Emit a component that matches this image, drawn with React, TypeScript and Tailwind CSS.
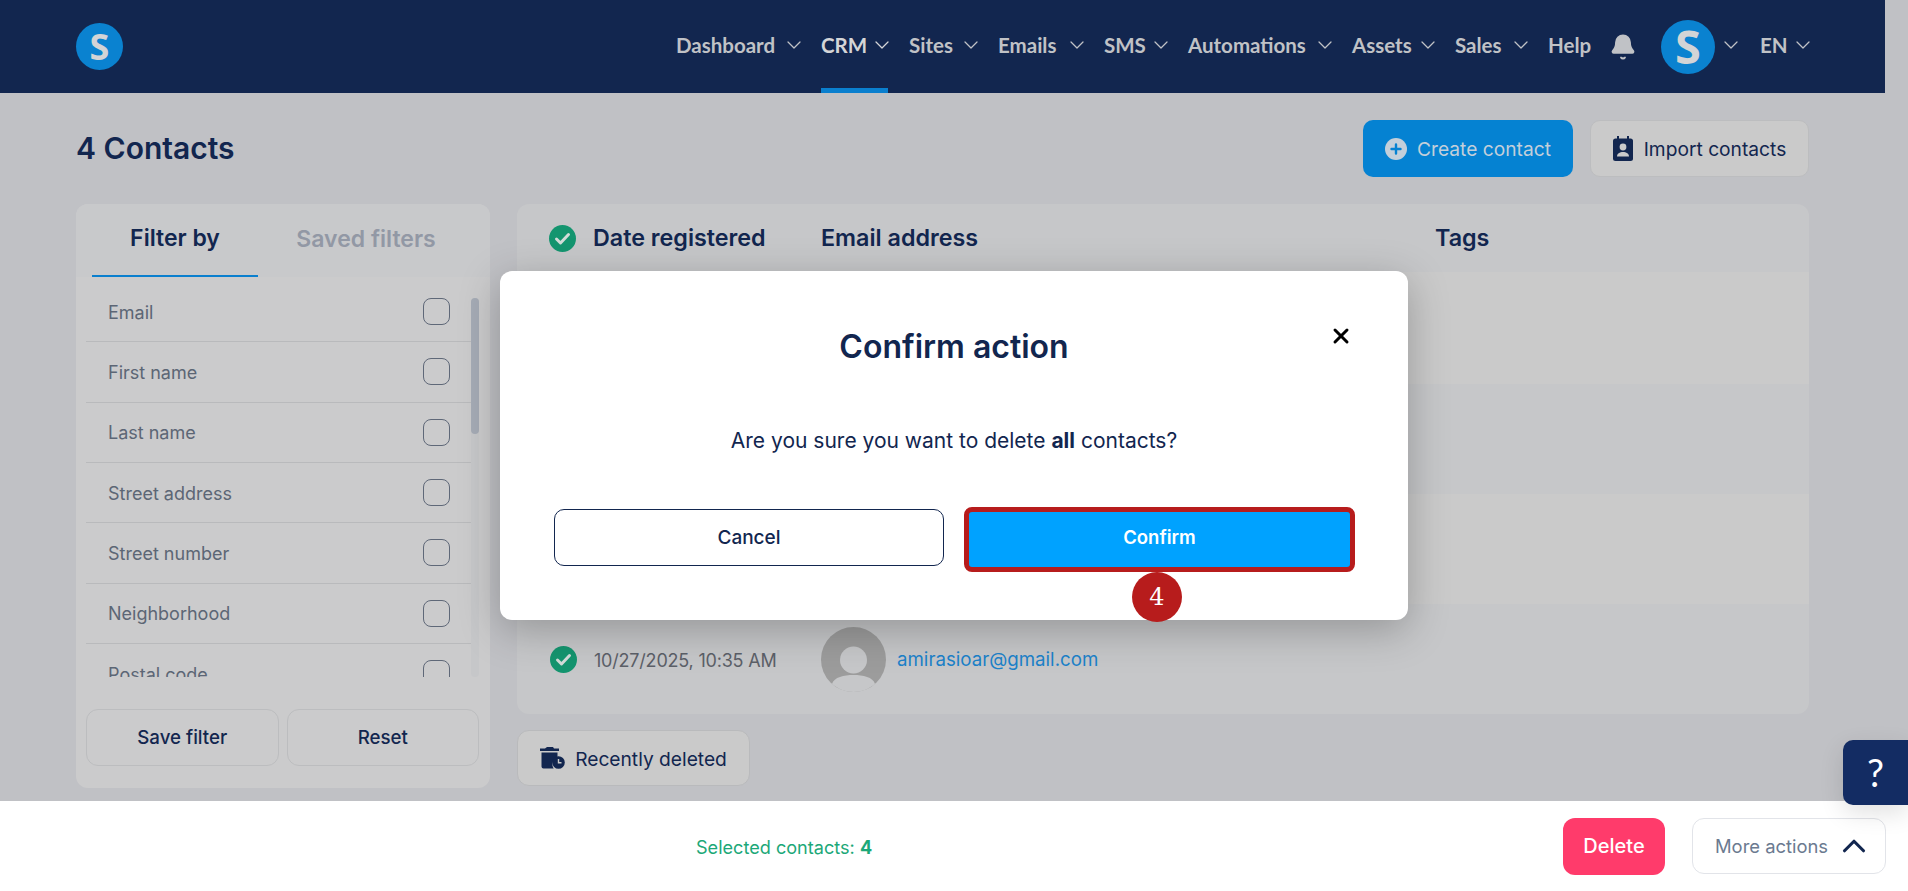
import React from "react";
import { Bell, ChevronDown, ChevronUp, X } from "lucide-react";

const navItems = [
  { label: "Dashboard", width: "w-[100px]" },
  { label: "CRM", width: "w-[43px]", active: true },
  { label: "Sites", width: "w-[44px]" },
  { label: "Emails", width: "w-[61px]" },
  { label: "SMS", width: "w-[39px]" },
  { label: "Automations", width: "w-[119px]" },
  { label: "Assets", width: "w-[58px]" },
  { label: "Sales", width: "w-[48px]" },
];

const filterFields = [
  "Email",
  "First name",
  "Last name",
  "Street address",
  "Street number",
  "Neighborhood",
  "Postal code",
];

function CheckCircle() {
  return (
    <svg viewBox="0 0 27 27" className="w-[27px] h-[27px] shrink-0">
      <circle cx="13.5" cy="13.5" r="13.5" fill="#14956f" />
      <path d="M7.5 14l4 4 8-8.5" fill="none" stroke="#d3dcd9" strokeWidth="3" strokeLinecap="round" strokeLinejoin="round" />
    </svg>
  );
}

function PlusCircle() {
  return (
    <svg viewBox="0 0 22 22" className="w-[22px] h-[22px] shrink-0">
      <circle cx="11" cy="11" r="11" fill="#c3cfda" />
      <path d="M11 6.5v9M6.5 11h9" stroke="#0582d2" strokeWidth="2.4" strokeLinecap="round" />
    </svg>
  );
}

function ContactBook() {
  return (
    <svg viewBox="0 0 20 25" className="w-[20px] h-[25px] shrink-0">
      <path d="M4 0h2v4H4zM14 0h2v4h-2z" fill="#12264f" />
      <rect x="0" y="2.5" width="20" height="22.5" rx="2.5" fill="#12264f" />
      <circle cx="10" cy="11" r="3.4" fill="#cacaca" />
      <path d="M4 20.5c0-3 2.7-4.5 6-4.5s6 1.500 6 4.500z" fill="#cacaca" />
    </svg>
  );
}

function TrashClock() {
  return (
    <svg viewBox="0 0 25 22" className="w-[25px] h-[22px] shrink-0">
      <path d="M7 0h6l1 1.500h5V4H0V1.500h5z" fill="#12264f" />
      <path d="M1.500 5.500h16v5.200a7 7 0 0 0-3.800 10.800H3.500a2 2 0 0 1-2-2z" fill="#12264f" />
      <circle cx="18.500" cy="15.500" r="6.300" fill="#12264f" />
      <path d="M18.500 12v3.800h3" fill="none" stroke="#cacaca" strokeWidth="1.400" />
    </svg>
  );
}

function Avatar() {
  return (
    <svg viewBox="0 0 65 65" className="w-[65px] h-[65px] shrink-0">
      <circle cx="32.500" cy="32.500" r="32.500" fill="#9c9c9c" />
      <circle cx="32.500" cy="33" r="13.500" fill="#c6c7c9" />
      <path d="M11 57c2-7 12-9 21.500-9s19.500 2 21.500 9c-6 5-13.500 8-21.500 8s-15.500-3-21.500-8z" fill="#c6c7c9" />
    </svg>
  );
}

function Logo({ size }: { size: "sm" | "lg" }) {
  return (
    <div
      className={
        size === "lg"
          ? "w-[54px] h-[54px] rounded-full bg-[#0a82d0] flex items-center justify-center text-[47px] font-bold leading-none text-[#d3d4d6] font-['Open_Sans',sans-serif]"
          : "w-[47px] h-[47px] rounded-full bg-[#0a82d0] flex items-center justify-center text-[36px] font-bold leading-none text-[#d3d4d6] font-['Open_Sans',sans-serif]"
      }
    >
      S
    </div>
  );
}

export default function App() {
  return (
    <div className="relative h-[891px] w-full overflow-hidden bg-[#c0c1c5] font-['Inter',sans-serif] text-[#12264f]">
      {/* Page behind the dialog */}
      <div className="h-[801px] w-[1885px]">
        <header className="h-[93px] bg-[#12264f] flex items-center pl-[76px]">
          <Logo size="sm" />
          <nav className="ml-auto flex items-center h-full text-[#c0c2c6] font-['Lato',sans-serif] font-bold text-[20.5px]">
            {navItems.map((item) => (
              <div
                key={item.label}
                className={
                  item.active
                    ? "relative h-full flex items-center mr-[15px] text-[#d4d5d7]"
                    : "relative h-full flex items-center mr-[15px]"
                }
              >
                <span className={`${item.width} pb-[2px] whitespace-nowrap`}>{item.label}</span>
                <ChevronDown className="w-[24px] h-[24px] ml-[6px] -mt-[4px]" strokeWidth={1.250} />
                {item.active && (
                  <span className="absolute left-0 right-[6px] bottom-0 h-[5px] bg-[#0a7fce]" />
                )}
              </div>
            ))}
            <span className="w-[42px] pb-[2px] whitespace-nowrap">Help</span>
            <Bell className="w-[28px] h-[28px] ml-[19px]" fill="#c0c2c6" strokeWidth={1.500} />
            <div className="ml-[24px]">
              <Logo size="lg" />
            </div>
            <ChevronDown className="w-[24px] h-[24px] ml-[4px] -mt-[4px]" strokeWidth={1.250} />
            <span className="ml-[17px] w-[26px] pb-[2px]">EN</span>
            <ChevronDown className="w-[24px] h-[24px] ml-[5px] -mt-[4px] mr-[70px]" strokeWidth={1.250} />
          </nav>
        </header>

        <div className="pl-[76px] pr-[76px]">
          <div className="h-[111px] flex items-center justify-between">
            <h1 className="text-[30px] font-semibold">4 Contacts</h1>
            <div className="flex items-center gap-[17px]">
              <button className="h-[57px] w-[210px] rounded-[10px] bg-[#0582d2] text-[#c3cfda] text-[19.2px] flex items-center justify-center gap-[10px]">
                <PlusCircle />
                <span className="pt-[2px]">Create contact</span>
              </button>
              <button className="h-[57px] w-[219px] rounded-[10px] bg-[#cacaca] border border-[#bcbdbf] text-[19.2px] flex items-center justify-center gap-[11px]">
                <ContactBook />
                <span className="pt-[2px]">Import contacts</span>
              </button>
            </div>
          </div>

          <div className="flex gap-[27px]">
            {/* Filters */}
            <aside className="w-[414px] h-[584px] rounded-[12px] bg-[#cbcbcc] overflow-hidden">
              <div className="flex h-[73px] bg-[#c8c9cb] pl-[16px] text-[23px] font-semibold">
                <div className="w-[166px] flex items-center justify-center border-b-[2px] border-[#0a7fce] pb-[2px]">
                  Filter by
                </div>
                <div className="w-[216px] flex items-center justify-center text-[#9298a5] pb-[2px]">
                  Saved filters
                </div>
              </div>
              <div className="relative h-[400px] overflow-hidden pt-[5px] pl-[10px] pr-[19px]">
                {filterFields.map((field) => (
                  <div
                    key={field}
                    className="h-[60.33px] flex items-center justify-between border-b border-[#b9babc] pl-[22px] pr-[21px] text-[#5c6675] text-[18px]"
                  >
                    <span className="mt-[1px]">{field}</span>
                    <span className="w-[27px] h-[27px] rounded-[8px] border border-[#5f6878]" />
                  </div>
                ))}
                <div className="absolute right-[11px] top-[21px] bottom-0 w-[8px] rounded-full bg-[#c6c7c9]">
                  <div className="h-[136px] rounded-full bg-[#a5abb5]" />
                </div>
              </div>
              <div className="flex gap-[8px] pl-[10px] pr-[11px] mt-[32px]">
                <button className="flex-1 h-[57px] pt-[2px] rounded-[12px] border border-[#bcbdbf] text-[18.7px] font-medium">
                  Save filter
                </button>
                <button className="flex-1 h-[57px] pt-[2px] rounded-[12px] border border-[#bcbdbf] text-[18.7px] font-medium">
                  Reset
                </button>
              </div>
            </aside>

            {/* Contacts table */}
            <div className="w-[1292px]">
              <div className="h-[510px] rounded-[12px] bg-[#c6c7c9] overflow-hidden">
                <div className="h-[68px] flex items-center pl-[32px] text-[23.3px] font-semibold">
                  <CheckCircle />
                  <span className="ml-[17px] w-[228px]">Date registered</span>
                  <span className="w-[614px]">Email address</span>
                  <span>Tags</span>
                </div>
                <div className="h-[112px] bg-[#cacaca]" />
                <div className="h-[110px]" />
                <div className="h-[110px] bg-[#cacaca]" />
                <div className="h-[110px] flex items-start pl-[33px]">
                  <div className="mt-[23px] mb-auto flex items-center h-[65px]">
                    <CheckCircle />
                    <span className="ml-[17px] w-[227px] pt-[2px] text-[18px] tracking-[-0.2px] text-[#5c6068] whitespace-nowrap">
                      10/27/2025, 10:35 AM
                    </span>
                    <Avatar />
                    <span className="ml-[11px] pt-[2px] text-[18.7px] text-[#1c82c9]">amirasioar@gmail.com</span>
                  </div>
                </div>
              </div>
              <button className="mt-[16px] h-[56px] w-[233px] rounded-[12px] bg-[#cacaca] border border-[#b9babc] text-[19.2px] flex items-center justify-center gap-[10px]">
                <TrashClock />
                <span className="pt-[2px]">Recently deleted</span>
              </button>
            </div>
          </div>
        </div>
      </div>

      {/* Selection bar */}
      <div className="h-[90px] bg-white flex items-center pr-[22px]">
        <span className="ml-[696px] pt-[3px] text-[18.1px] text-[#1ca878]">
          Selected contacts: <b>4</b>
        </span>
        <button className="ml-auto h-[57px] w-[102px] rounded-[12px] bg-[#ff3b6b] text-white text-[20px] font-medium">
          Delete
        </button>
        <button className="ml-[27px] h-[56px] w-[194px] rounded-[12px] border border-[#e2e4e9] flex items-center pl-[22px] text-[18.4px] text-[#6b7a90]">
          <span className="pt-[2px]">More actions</span>
          <ChevronUp className="w-[38px] h-[38px] ml-auto mr-[12px] text-[#12264f]" strokeWidth={2} />
        </button>
      </div>

      {/* Help tab */}
      <div className="absolute right-0 top-[740px] w-[65px] h-[65px] rounded-l-[10px] bg-[#132c63] flex items-center justify-center text-white text-[38px] font-['Lato',sans-serif] shadow-[0_8px_24px_rgba(0,0,0,0.12)]">
        ?
      </div>

      {/* Confirm dialog */}
      <div className="absolute left-[500px] top-[271px] w-[908px] h-[349px] rounded-[12px] bg-white shadow-[0_10px_40px_rgba(0,0,0,0.25)] flex flex-col items-center">
        <h2 className="mt-[54px] text-[32px] leading-[44px] font-semibold">Confirm action</h2>
        <X className="absolute right-[55px] top-[53px] w-[24px] h-[24px] text-black" strokeWidth={3} />
        <p className="mt-[56px] text-[21px] leading-[32px]">
          Are you sure you want to delete <b>all</b> contacts?
        </p>
        <div className="mt-[52px] w-full flex items-start pl-[54px] pr-[53px]">
          <button className="w-[390px] h-[57px] pt-[2px] rounded-[10px] border border-[#12264f] text-[19px] font-medium">
            Cancel
          </button>
          <button className="ml-[20px] -mt-[2px] w-[391px] h-[65px] pb-[3px] rounded-[8px] border-[5px] border-[#b71c1c] bg-[#00a2ff] text-white text-[18.5px] font-semibold">
            Confirm
          </button>
        </div>
        <div className="absolute left-[632px] top-[301px] w-[50px] h-[50px] rounded-full bg-[#b71c1c] flex items-center justify-center text-white text-[24px] font-['DejaVu_Serif',serif]">
          4
        </div>
      </div>
    </div>
  );
}
